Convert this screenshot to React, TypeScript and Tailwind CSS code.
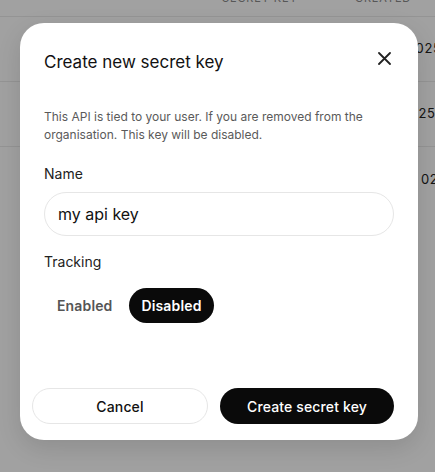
import React from "react";

const rows = [
  { text: "2025", pad: "pl-[52px]" },
  { text: "2025", pad: "pl-[46px]" },
  { text: "02/2025", pad: "pl-[66px]" },
];

export default function App() {
  return (
    <div
      className="relative w-[435px] h-[472px] overflow-hidden bg-white"
      style={{ fontFamily: "Inter, 'Noto Sans', sans-serif" }}
    >
      {/* background page */}
      <div className="w-full">
        <div className="flex h-[17px] items-end border-b border-[#ebebeb] text-[11px] tracking-[0.08em] text-[#8a8a8a]">
          <div className="w-[222px] shrink-0" />
          <div className="w-[133px] shrink-0 leading-[13px] relative top-[-11px]">SECRET KEY</div>
          <div className="shrink-0 leading-[13px] relative top-[-11px]">CREATED</div>
        </div>
        {rows.map((r, i) => (
          <div
            key={i}
            className={`flex h-[65px] items-center text-[13px] tracking-[0.05em] text-[#222] ${i < 2 ? "border-b border-[#ebebeb]" : ""}`}
          >
            <div className="w-[355px] shrink-0" />
            <div className={`${r.pad} whitespace-nowrap`}>{r.text}</div>
          </div>
        ))}
      </div>

      {/* overlay */}
      <div className="absolute inset-0 bg-black/[0.37]" />

      {/* modal */}
      <div className="absolute left-[20px] top-[23px] w-[398px] h-[417px] rounded-[24px] bg-white shadow-[0_8px_24px_rgba(0,0,0,0.12)] flex flex-col">
        <div className="px-6 pt-[25px]">
          <div className="flex items-start justify-between">
            <h2 className="text-[17px] leading-[28px] text-[#111] font-normal">Create new secret key</h2>
            <button className="mt-[2px] mr-[2px] flex h-[16px] w-[16px] items-center justify-center text-[#222]">
              <svg width="13" height="13" viewBox="0 0 13 13" fill="none">
                <path d="M1 1L12 12M12 1L1 12" stroke="currentColor" strokeWidth="1.8" strokeLinecap="round" />
              </svg>
            </button>
          </div>
          <p className="mt-[32px] text-[12px] leading-[17.5px] text-[#5a5a5a]">
            This API is tied to your user. If you are removed from the organisation. This key will be disabled.
          </p>
          <div className="mt-[21px] text-[14px] leading-[20px] text-[#222]">Name</div>
          <div className="mt-[8px] flex h-[44px] w-[350px] items-center rounded-full border border-[#e6e6e6] px-[13px] text-[16px] text-[#111]">
            my api key
          </div>
          <div className="mt-[16px] text-[14px] leading-[20px] text-[#222]">Tracking</div>
          <div className="mt-[16px] ml-px flex gap-[5px]">
            <button className="h-[35px] rounded-full px-3 text-[14px] font-semibold tracking-[0.01em] text-[#555]">Enabled</button>
            <button className="h-[35px] rounded-full bg-[#0a0a0a] px-3 text-[14px] font-semibold tracking-[0.01em] text-white">Disabled</button>
          </div>
        </div>
        <div className="mt-auto flex gap-3 pb-4 pl-3 pr-6">
          <button className="h-[36px] flex-1 rounded-full border border-[#e6e6e6] bg-white text-[14px] font-medium tracking-[0.01em] text-[#111]">
            Cancel
          </button>
          <button className="h-[36px] flex-1 rounded-full bg-[#0a0a0a] text-[14px] font-medium tracking-[0.01em] text-white">
            Create secret key
          </button>
        </div>
      </div>
    </div>
  );
}
